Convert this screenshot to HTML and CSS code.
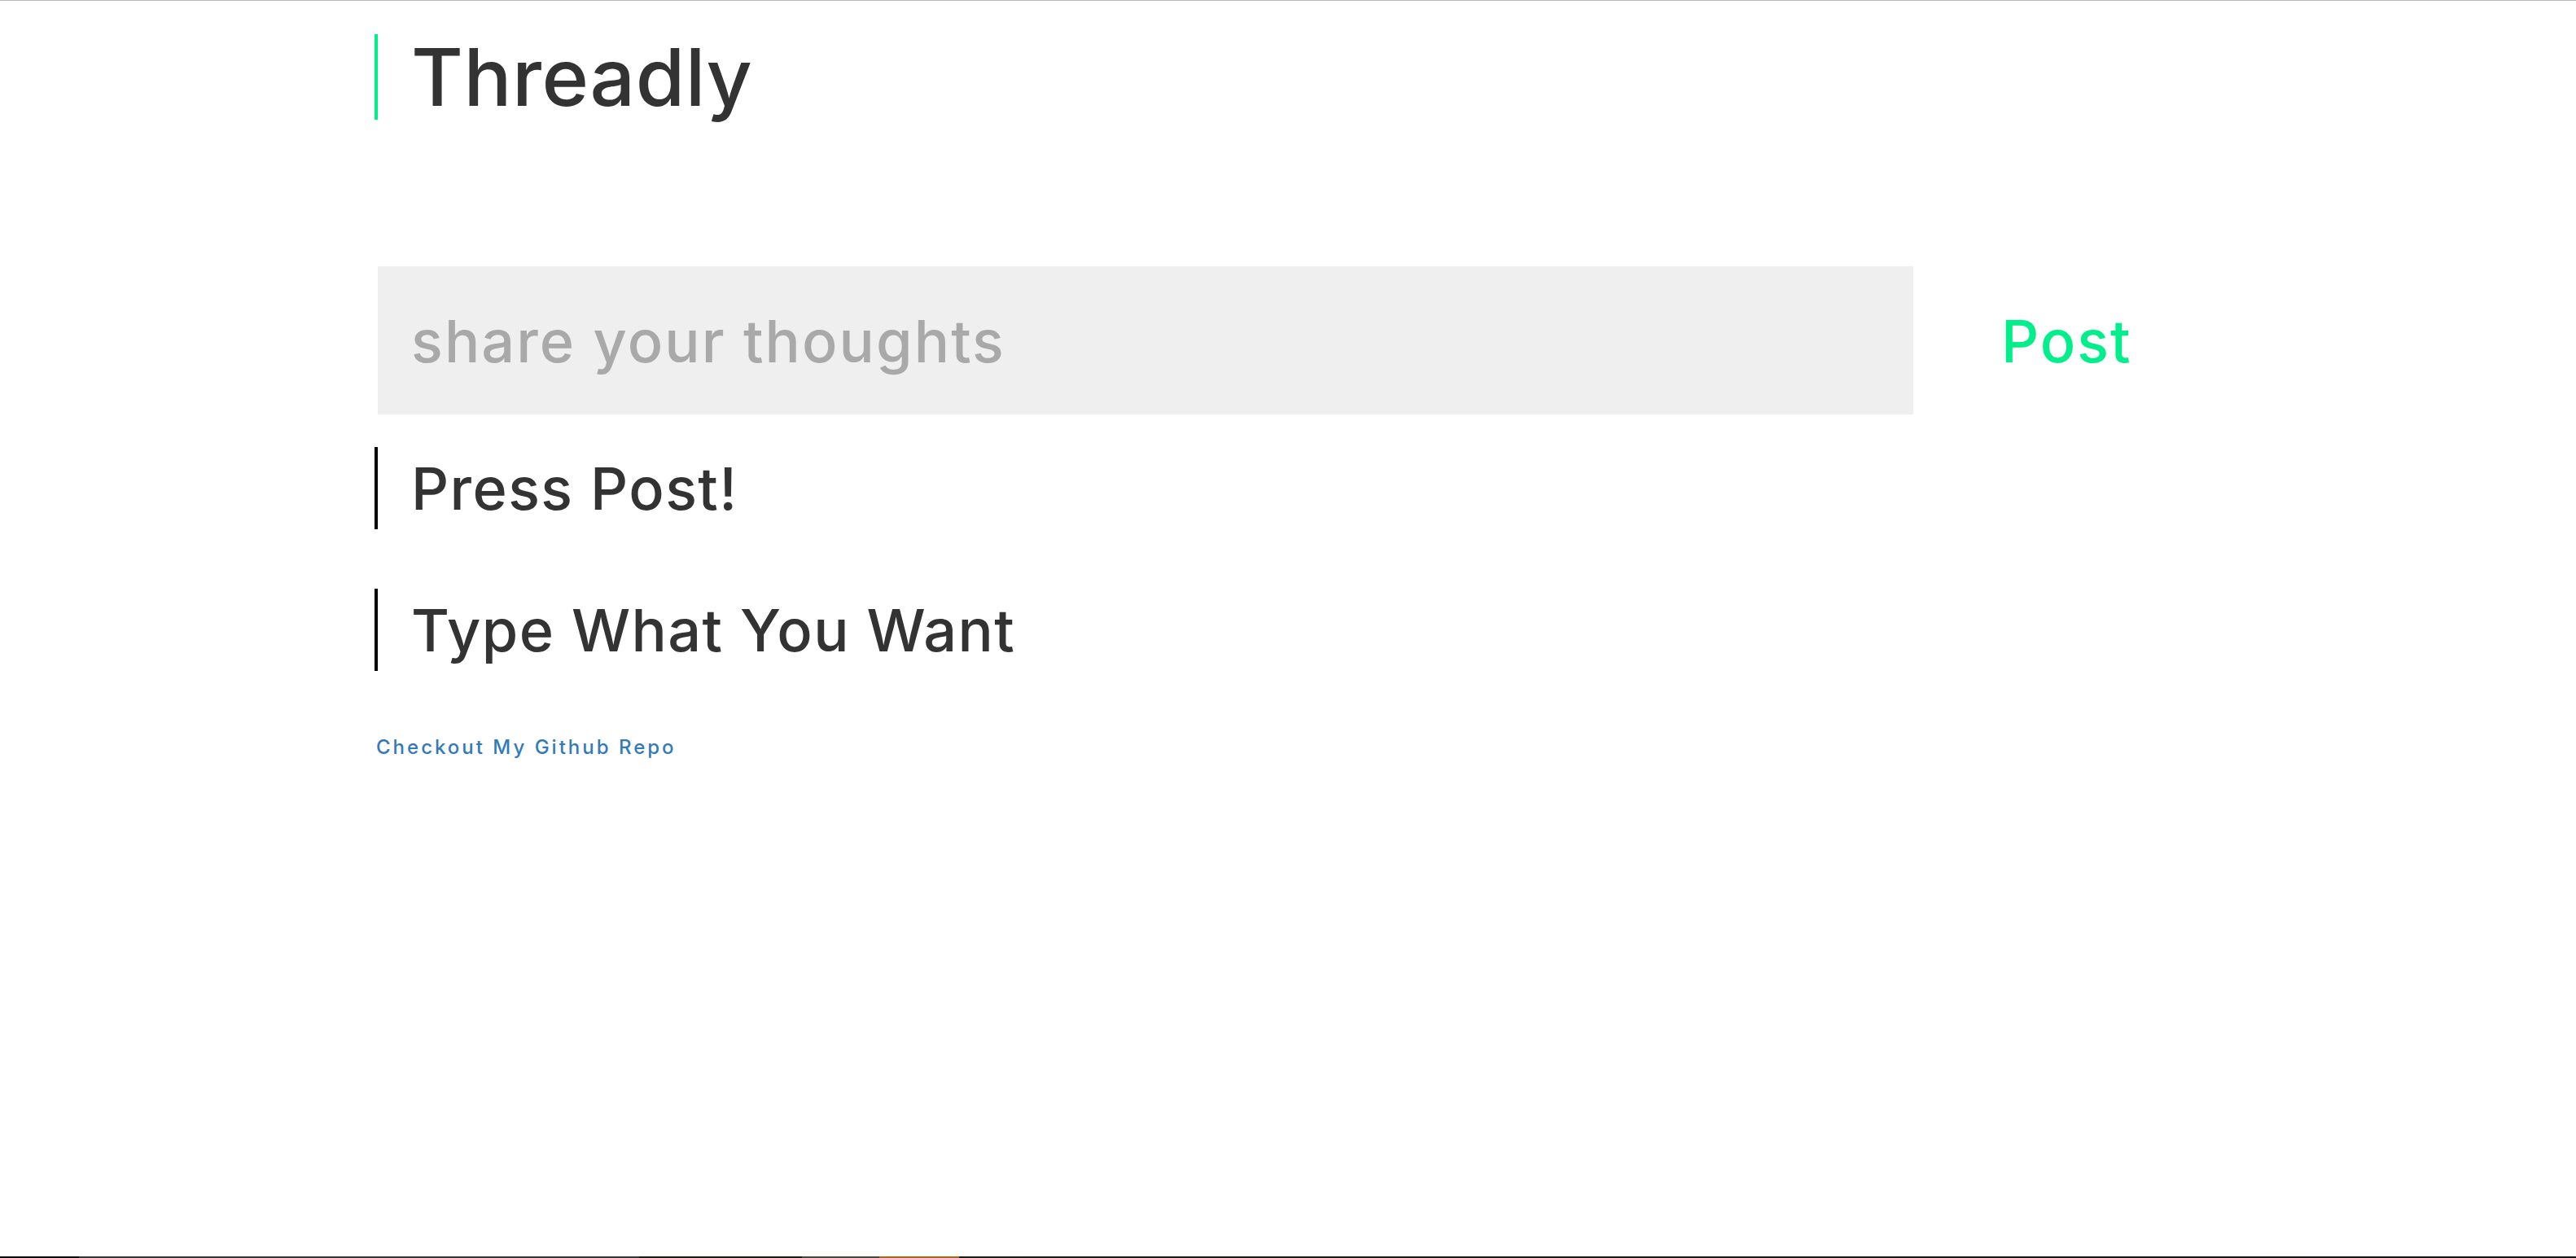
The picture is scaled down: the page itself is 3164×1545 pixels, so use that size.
FILE: index.html
```html
<!DOCTYPE html>
<html lang="en">
<head>
<meta charset="utf-8">
<title>Threadly</title>
<link rel="stylesheet" href="styles.css">
</head>
<body>
<div class="page">
  <main class="container">
    <h1 class="brand">Threadly</h1>
    <form class="composer">
      <input class="composer-input" type="text" placeholder="share your thoughts">
      <button class="post-btn" type="button">Post</button>
    </form>
    <ul class="threads">
      <li class="thread">Press Post!</li>
      <li class="thread">Type What You Want</li>
    </ul>
    <a class="repo-link" href="#">Checkout My Github Repo</a>
  </main>
  <div class="taskbar">
    <span class="seg seg-a"></span>
    <span class="seg seg-b"></span>
    <span class="seg seg-c"></span>
    <span class="seg seg-d"></span>
    <span class="seg seg-e"></span>
    <span class="seg seg-f"></span>
  </div>
</div>
</body>
</html>
```

FILE: styles.css
```css
* { box-sizing: border-box; }
html, body { margin: 0; padding: 0; background: #fff; }
body { font-family: Inter, "Noto Sans", sans-serif; color: #333; font-weight: 500; }

.page {
  height: 100vh;
  display: flex;
  flex-direction: column;
  border-top: 1px solid #b9b9b9;
}

.container {
  flex: 1;
  width: 2244px;
  margin: 0 auto;
  display: flex;
  flex-direction: column;
  align-items: flex-start;
}

.brand {
  margin: 41px 0 0;
  height: 105px;
  line-height: 105px;
  font-size: 98px;
  font-weight: 500;
  letter-spacing: 0.5px;
  color: #333;
  border-left: 4px solid #00ef8b;
  padding-left: 41px;
}

.composer {
  margin: 180px 0 0;
  display: flex;
  align-items: center;
  height: 182px;
}

.composer-input {
  margin-left: 4px;
  width: 1886px;
  height: 182px;
  background: #efefef;
  border: none;
  outline: none;
  padding: 0 0 0 41px;
  font-family: inherit;
  font-weight: 500;
  font-size: 72px;
  letter-spacing: 2.1px;
  color: #333;
}
.composer-input::placeholder { color: #a9a9a9; }

.post-btn {
  margin-left: 108px;
  background: none;
  border: none;
  padding: 0;
  font-family: inherit;
  font-weight: 500;
  font-size: 72px;
  letter-spacing: 2px;
  color: #00ef8b;
  cursor: pointer;
}

.threads {
  list-style: none;
  margin: 40px 0 0;
  padding: 0;
  display: flex;
  flex-direction: column;
  gap: 73px;
}

.thread {
  height: 101px;
  line-height: 101px;
  font-size: 72px;
  letter-spacing: 1.4px;
  color: #333;
  border-left: 4px solid #000;
  padding-left: 41px;
}

.repo-link {
  margin-top: 77px;
  font-size: 24px;
  line-height: 34px;
  letter-spacing: 3px;
  color: #337ab7;
  text-decoration: none;
  padding-left: 2px;
}

.taskbar {
  height: 2px;
  display: flex;
}
.seg { display: block; height: 100%; }
.seg-a { width: 97px; background: #080808; }
.seg-b { width: 688px; background: #353535; }
.seg-c { width: 200px; background: #1d1a0e; }
.seg-d { width: 95px; background: #4a4639; }
.seg-e { width: 98px; background: #b0621f; }
.seg-f { flex: 1; background: linear-gradient(90deg, #1f1c10, #141414); }
```
